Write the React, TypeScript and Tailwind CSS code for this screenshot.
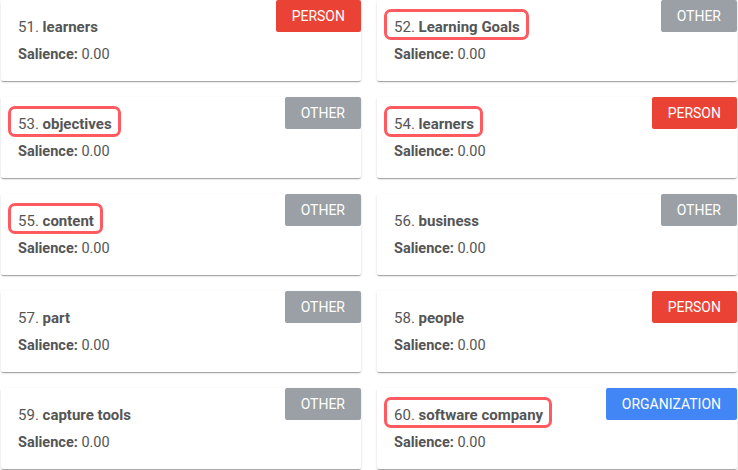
import React from 'react';

type Entity = {
  n: number;
  name: string;
  type: 'PERSON' | 'OTHER' | 'ORGANIZATION';
  flagged?: boolean;
};

const ENTITIES: Entity[] = [
  { n: 51, name: 'learners', type: 'PERSON' },
  { n: 52, name: 'Learning Goals', type: 'OTHER', flagged: true },
  { n: 53, name: 'objectives', type: 'OTHER', flagged: true },
  { n: 54, name: 'learners', type: 'PERSON', flagged: true },
  { n: 55, name: 'content', type: 'OTHER', flagged: true },
  { n: 56, name: 'business', type: 'OTHER' },
  { n: 57, name: 'part', type: 'OTHER' },
  { n: 58, name: 'people', type: 'PERSON' },
  { n: 59, name: 'capture tools', type: 'OTHER' },
  { n: 60, name: 'software company', type: 'ORGANIZATION', flagged: true },
];

const BADGE_COLORS: Record<Entity['type'], string> = {
  PERSON: 'bg-[#ea4335]',
  OTHER: 'bg-[#9aa0a6]',
  ORGANIZATION: 'bg-[#4285f4]',
};

function EntityCard({ entity }: { entity: Entity }) {
  return (
    <div className="relative h-[81px] rounded-[2px] bg-white pl-[17px] pt-[17px] shadow-[0_2px_1px_-1px_rgba(0,0,0,0.2),0_1px_1px_0_rgba(0,0,0,0.14),0_1px_3px_0_rgba(0,0,0,0.12)]">
      <div className="flex items-start justify-between">
        <div className="relative text-[15px] leading-5">
          {entity.flagged && (
            <span className="pointer-events-none absolute -bottom-[3px] -left-[10px] -right-[9px] -top-[8px] rounded-[7px] border-[3px] border-[#ff5a5f]" />
          )}
          <span>{entity.n}. </span>
          <span className="font-bold">{entity.name}</span>
        </div>
      </div>
      <div className="mt-[8px] text-[14.5px] leading-5">
        <span className="font-bold">Salience:</span> 0.00
      </div>
      <span
        className={`absolute right-0 top-0 flex h-8 items-center rounded-[2px] px-4 text-[14px] text-white ${BADGE_COLORS[entity.type]}`}
      >
        {entity.type}
      </span>
    </div>
  );
}

export default function App() {
  return (
    <div className="h-[470px] w-[738px] overflow-hidden bg-white font-['Roboto',sans-serif] text-[#555555]">
      <div className="grid grid-cols-[360px_360px] gap-x-4 gap-y-4 pl-[1px]">
        {ENTITIES.map((e) => (
          <EntityCard key={e.n} entity={e} />
        ))}
      </div>
    </div>
  );
}
